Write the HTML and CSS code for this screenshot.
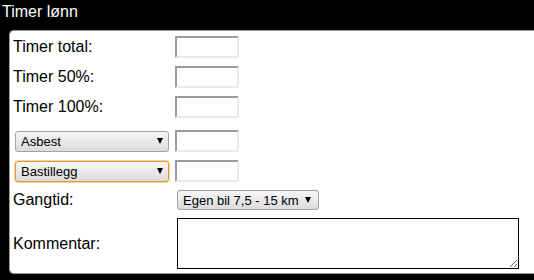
FILE: index.html
```html
<!DOCTYPE html>
<html lang="no">
<head>
<meta charset="utf-8">
<title>Timer lønn</title>
<link rel="stylesheet" href="styles.css">
</head>
<body>
<div class="title">Timer lønn</div>
<div class="panel">
  <div class="row r1">
    <div class="cell"><label class="lbl">Timer total:</label></div>
    <input class="num" type="text">
  </div>
  <div class="row r2">
    <div class="cell"><label class="lbl">Timer 50%:</label></div>
    <input class="num" type="text">
  </div>
  <div class="row r3">
    <div class="cell"><label class="lbl">Timer 100%:</label></div>
    <input class="num" type="text">
  </div>
  <div class="row r4">
    <div class="cell"><span class="sel"><select class="dd dd-wide"><option>Asbest</option></select></span></div>
    <input class="num" type="text">
  </div>
  <div class="row r5">
    <div class="cell"><span class="sel"><select class="dd dd-wide dd-focus"><option>Bastillegg</option></select></span></div>
    <input class="num" type="text">
  </div>
  <div class="row r6">
    <div class="cell"><label class="lbl">Gangtid:</label></div>
    <span class="sel sel-gang"><select class="dd dd-gang"><option>Egen bil 7,5 - 15 km</option></select></span>
  </div>
  <div class="row r7">
    <div class="cell"><label class="lbl">Kommentar:</label></div>
    <textarea class="note"></textarea>
  </div>
</div>
</body>
</html>
```

FILE: styles.css
```css
html, body {
  margin: 0;
  padding: 0;
  background: #000;
  overflow: hidden;
  font-family: "Liberation Sans", Arial, sans-serif;
}

.title {
  height: 30px;
  line-height: 24px;
  padding-left: 2px;
  color: #fff;
  font-size: 16px;
}

.panel {
  box-sizing: border-box;
  width: 545px;
  height: 244px;
  margin-left: 9px;
  padding: 5px 0 0 3px;
  background: #fff;
  border: 1px solid #9a9a9a;
  border-right: none;
  border-radius: 5px 0 0 5px;
}

.row {
  display: flex;
  align-items: center;
}

.r1 { height: 22px; }
.r2 { height: 22px; margin-top: 8px; }
.r3 { height: 22px; margin-top: 8px; }
.r4 { height: 22px; margin-top: 12px; }
.r5 { height: 22px; margin-top: 8px; }
.r6 { height: 20px; margin-top: 8px; }
.r7 { height: 51px; margin-top: 8px; }

.cell {
  flex: none;
  width: 162px;
  display: flex;
  align-items: center;
}

.lbl {
  font-size: 16px;
  color: #000;
  line-height: 18px;
}

.num {
  box-sizing: border-box;
  width: 64px;
  height: 22px;
  margin: 0;
  padding: 0 2px;
  border-style: solid;
  border-width: 2px;
  border-color: #9b9b9b #e9e9e9 #e9e9e9 #9b9b9b;
  background: #fff;
  font: 13px "Liberation Sans", Arial, sans-serif;
}

.sel {
  position: relative;
  display: inline-block;
  margin-left: 2px;
  line-height: 0;
}

.sel::after {
  content: "";
  position: absolute;
  right: 6px;
  top: 50%;
  margin-top: -3px;
  border-left: 3.5px solid transparent;
  border-right: 3.5px solid transparent;
  border-top: 6px solid #000;
  pointer-events: none;
}

.sel-gang::after {
  right: 8px;
}

.dd {
  -webkit-appearance: none;
  appearance: none;
  box-sizing: border-box;
  margin: 0;
  padding: 0 0 0 5px;
  border: 1px solid #a3a3a3;
  border-radius: 3px;
  background: linear-gradient(#f7f7f7, #dcdcdc);
  color: #000;
  font: 13px "Liberation Sans", Arial, sans-serif;
  outline: none;
}

.dd-wide {
  width: 154px;
  height: 21px;
}

.dd-focus {
  border-color: #e09c35;
  box-shadow: 0 0 0 1px #f3d3a0;
}

.dd-gang {
  width: 142px;
  height: 20px;
}

.note {
  box-sizing: border-box;
  width: 342px;
  height: 51px;
  margin: 0 0 0 2px;
  padding: 2px;
  border: 1px solid #000;
  background: #fff;
  resize: both;
  font: 13px "Liberation Sans", Arial, sans-serif;
}
```
